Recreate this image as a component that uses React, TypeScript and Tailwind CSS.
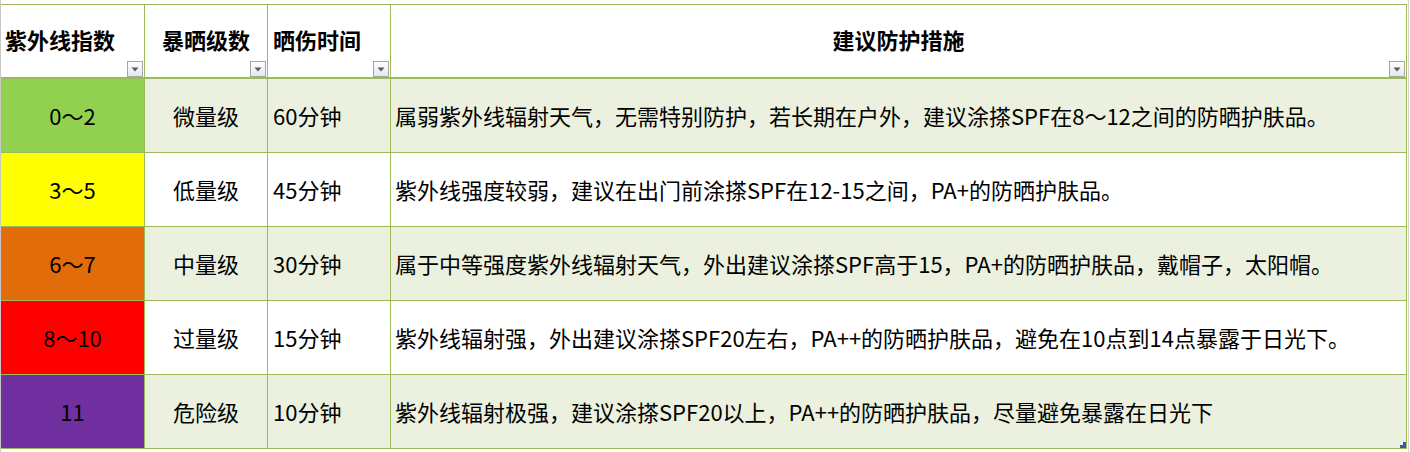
import React from 'react';

interface UvRow {
  index: string;
  level: string;
  time: string;
  advice: string;
  color: string;
}

const rows: UvRow[] = [
  {
    index: '0～2',
    level: '微量级',
    time: '60分钟',
    advice: '属弱紫外线辐射天气，无需特别防护，若长期在户外，建议涂搽SPF在8～12之间的防晒护肤品。',
    color: 'bg-[#92d050]',
  },
  {
    index: '3～5',
    level: '低量级',
    time: '45分钟',
    advice: '紫外线强度较弱，建议在出门前涂搽SPF在12-15之间，PA+的防晒护肤品。',
    color: 'bg-[#ffff00]',
  },
  {
    index: '6～7',
    level: '中量级',
    time: '30分钟',
    advice: '属于中等强度紫外线辐射天气，外出建议涂搽SPF高于15，PA+的防晒护肤品，戴帽子，太阳帽。',
    color: 'bg-[#e26b0a]',
  },
  {
    index: '8～10',
    level: '过量级',
    time: '15分钟',
    advice: '紫外线辐射强，外出建议涂搽SPF20左右，PA++的防晒护肤品，避免在10点到14点暴露于日光下。',
    color: 'bg-[#ff0000]',
  },
  {
    index: '11',
    level: '危险级',
    time: '10分钟',
    advice: '紫外线辐射极强，建议涂搽SPF20以上，PA++的防晒护肤品，尽量避免暴露在日光下',
    color: 'bg-[#7030a0]',
  },
];

// Excel autofilter dropdown button
const FilterButton: React.FC = () => (
  <div className="absolute right-px bottom-0 w-[16px] h-[16px] border border-[#a6a6a6] bg-gradient-to-b from-white to-[#e4e7ec] flex items-center justify-center">
    <svg width="8" height="5" viewBox="0 0 8 5">
      <path d="M0.5 0.5 L7.5 0.5 L4 4.5 Z" fill="#5a5a5a" />
    </svg>
  </div>
);

const cell = 'relative flex items-center border-r border-b border-[#9bbb59]';

const App: React.FC = () => {
  return (
    <div
      className="w-[1410px] h-[452px] bg-white flex text-black overflow-hidden"
      style={{ fontFamily: '"Microsoft YaHei", "Noto Sans CJK SC", "Noto Sans", sans-serif' }}
    >
      {/* left grid line */}
      <div className="w-px h-full bg-[#c8c8c8]" />

      <div className="pt-[4px]">
        <div className="grid grid-cols-[144px_123px_123px_1016px] border-t border-[#9bbb59] text-[22px] leading-none">
          {/* Header */}
          <div className={`${cell} h-[74px] border-b-2 font-bold pl-[4px] pb-[4px]`}>
            紫外线指数
            <FilterButton />
          </div>
          <div className={`${cell} h-[74px] border-b-2 font-bold justify-center pb-[4px]`}>
            暴晒级数
            <FilterButton />
          </div>
          <div className={`${cell} h-[74px] border-b-2 font-bold pl-[5px] pb-[4px]`}>
            晒伤时间
            <FilterButton />
          </div>
          <div className={`${cell} h-[74px] border-b-2 font-bold justify-center pb-[4px]`}>
            建议防护措施
            <FilterButton />
          </div>

          {rows.map((row, i) => {
            const bg = i % 2 === 0 ? 'bg-[#ebf1de]' : 'bg-white';
            const last = i === rows.length - 1;
            return (
              <React.Fragment key={row.index}>
                <div className={`${cell} h-[74px] pb-[2px] justify-center ${row.color}`}>{row.index}</div>
                <div className={`${cell} h-[74px] pb-[2px] justify-center ${bg}`}>{row.level}</div>
                <div className={`${cell} h-[74px] pb-[2px] pl-[5px] ${bg}`}>{row.time}</div>
                <div className={`${cell} h-[74px] pb-[2px] pl-[4px] ${bg}`}>
                  {row.advice}
                  {last && (
                    <>
                      <div className="absolute right-0 bottom-0 w-[6px] h-[3px] bg-[#3f51b5]" />
                      <div className="absolute right-0 bottom-[3px] w-[3px] h-[3px] bg-[#3f51b5]" />
                    </>
                  )}
                </div>
              </React.Fragment>
            );
          })}
        </div>
      </div>

      {/* next column grid line */}
      <div className="w-[3px] h-full pl-px">
        <div className="w-px h-full bg-[#d4d4d4]" />
      </div>
    </div>
  );
};

export default App;
